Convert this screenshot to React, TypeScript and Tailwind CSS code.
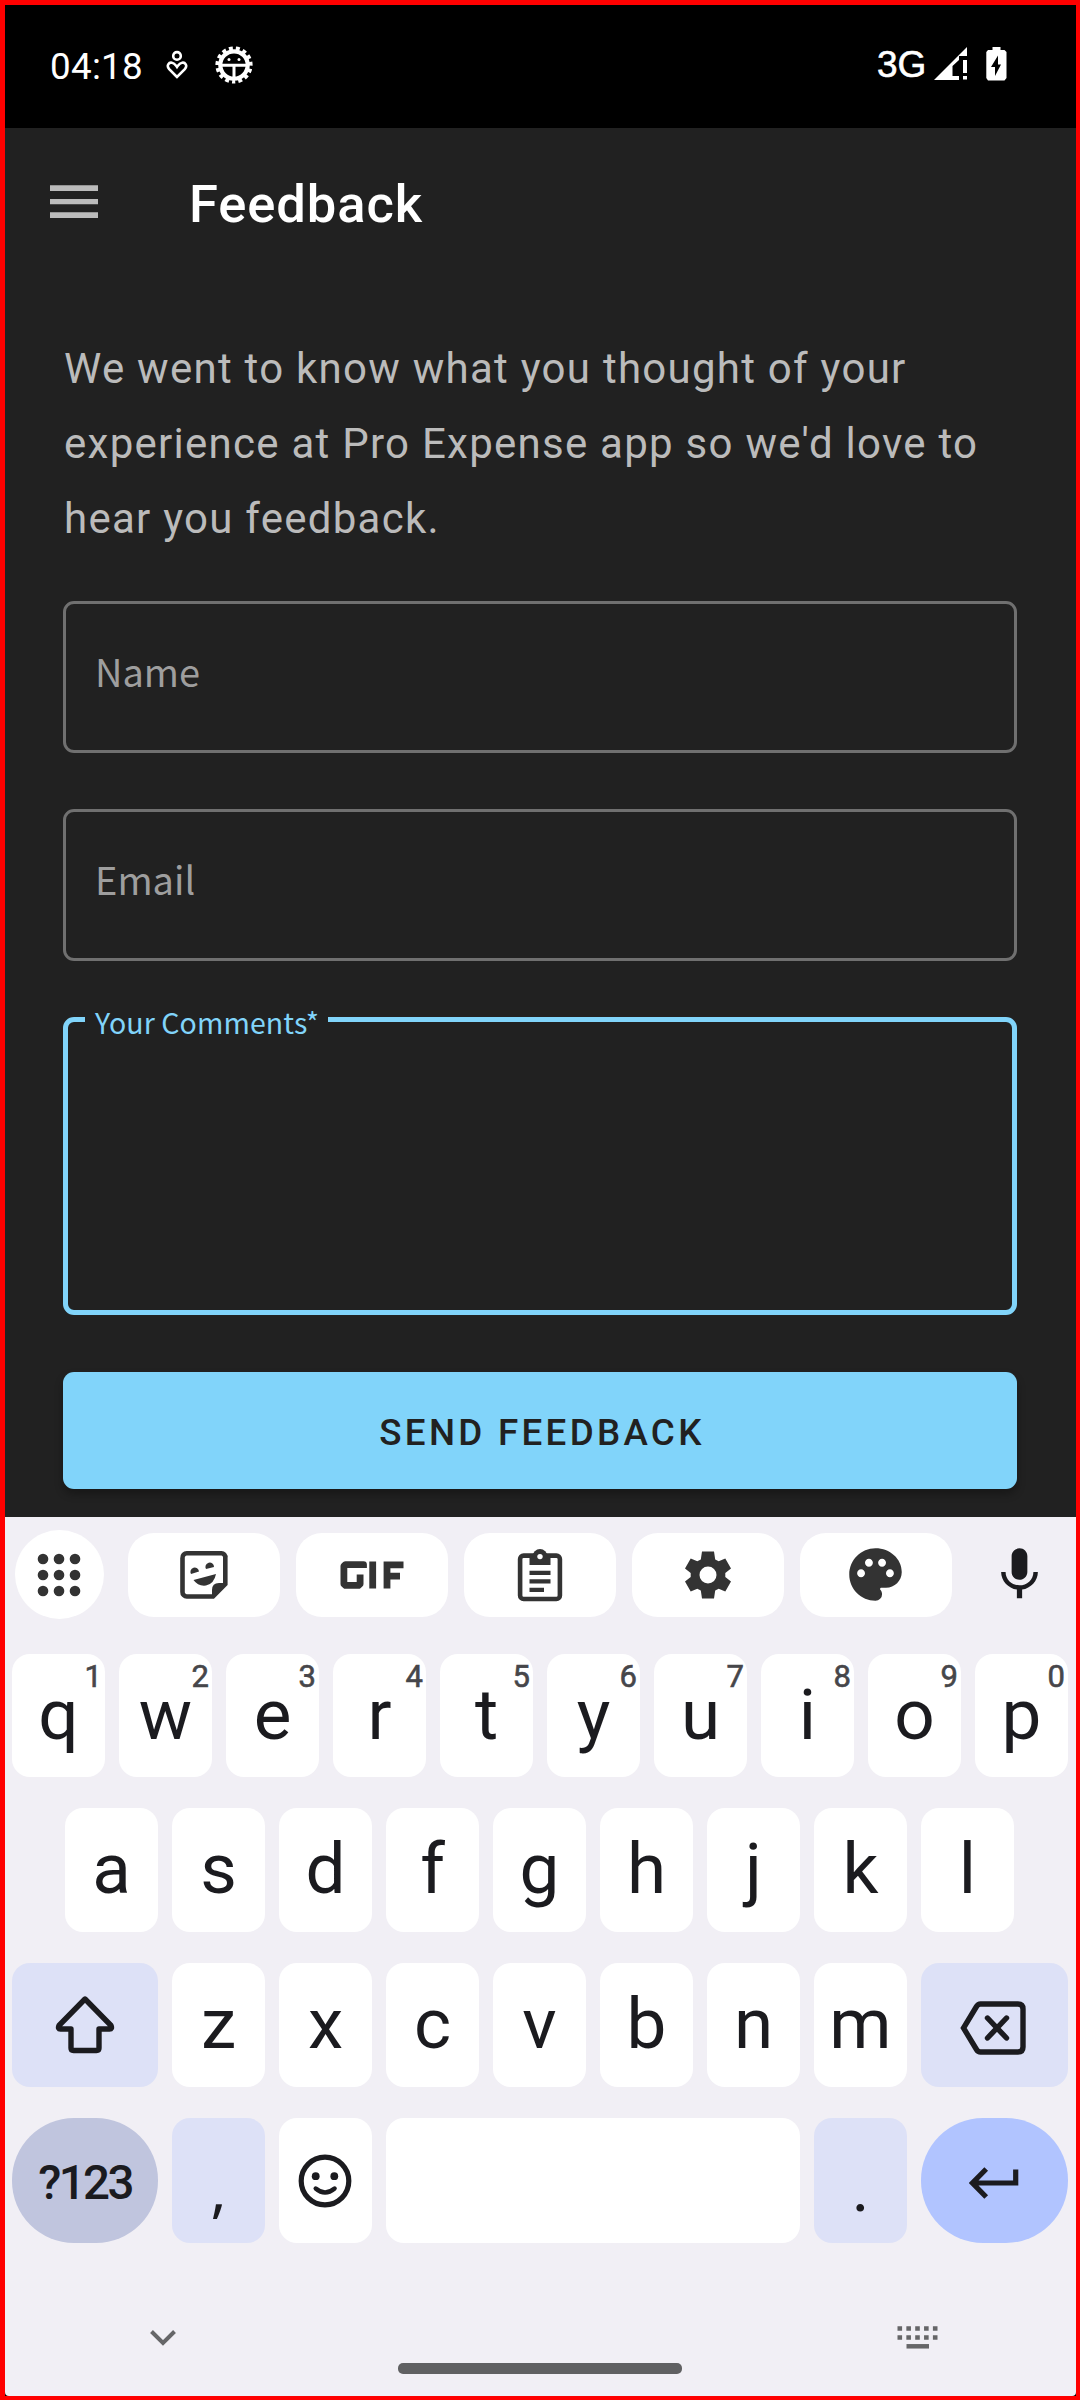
import React from "react";
import { MdPalette, MdMic } from "react-icons/md";

const topRow = ["q", "w", "e", "r", "t", "y", "u", "i", "o", "p"];
const midRow = ["a", "s", "d", "f", "g", "h", "j", "k", "l"];
const lowRow = ["z", "x", "c", "v", "b", "n", "m"];

function StatusBar() {
  return (
    <div className="flex h-[123px] w-full items-start bg-black text-white">
      <span className="ml-[45px] mt-[40px] w-[95px] text-[36.75px] leading-[44px] tracking-[0.3px]">04:18</span>
      <svg className="ml-[21px] mt-[45px] h-[30px] w-[22px]" viewBox="0 0 22 30" fill="none" stroke="white" strokeWidth="2.6">
        <circle cx="11" cy="5.9" r="3.8" />
        <path d="M11 27 L3.2 19.2 C0 15.5 3 12 6 12.7 C8.5 13 9.5 15 11 17 C12.5 15 13.5 13 16 12.7 C19 12 22 15.5 18.8 19.2 Z" />
      </svg>
      <svg className="ml-[26px] mt-[40px] h-[40px] w-[40px]" viewBox="-20 -20 40 40">
        <circle r="13.7" fill="none" stroke="white" strokeWidth="4.2" />
        <circle r="16.7" fill="none" stroke="white" strokeWidth="3.8" strokeDasharray="3.9 3.095" strokeDashoffset="1.95" transform="rotate(90)" />
        <circle cx="-5" cy="-5.5" r="1.5" fill="white" />
        <circle cx="5" cy="-5.5" r="1.5" fill="white" />
        <path d="M-13 0.3H13M0 0.3V14" stroke="white" strokeWidth="3" />
      </svg>
      <div className="grow" />
      <span className="mt-[38px] w-[50px] font-['Liberation_Sans',sans-serif] text-[37px] leading-[44px] [-webkit-text-stroke:0.6px_white]">3G</span>
      <svg className="ml-[6px] mt-[42px] h-[34px] w-[36px]" viewBox="0 0 36 34" fill="white">
        <path d="M34 0V9H26V13L19.5 19V29H26V33H1Z" />
        <path d="M30 13H34V26H30ZM30 29H34V32.5H30Z" />
      </svg>
      <svg className="ml-[17px] mr-[69px] mt-[42px] h-[34px] w-[21px]" viewBox="0 0 21 34">
        <path d="M6.5 0H14.5V3H18.5L20.5 5V31L18.5 33.5H2L0.3 31V5L2 3H6.5Z" fill="white" />
        <path d="M12 8.5L5 20H9V29L15 17.5H12Z" fill="black" />
      </svg>
    </div>
  );
}

function Field({ label }: { label: string }) {
  return (
    <div className="h-[152px] rounded-[11px] border-[3px] border-[#707070] pl-[29px] pt-[40px] font-['Noto_Sans_CJK_SC',sans-serif] text-[38px] leading-[54px] text-[#9e9e9e]">
      {label}
    </div>
  );
}

function Key({ label, hint }: { label: string; hint?: string }) {
  return (
    <div className="relative h-full w-[93px] shrink-0 rounded-[18px] bg-white pt-[21px] text-center text-[71px] leading-[80px] text-[#1b1b1f]">
      {label}
      {hint && <span className="absolute right-[3px] top-[5px] text-[31px] leading-[36px] text-[#46464a] [-webkit-text-stroke:0.6px_#46464a]">{hint}</span>}
    </div>
  );
}

function Tool({ children }: { children: React.ReactNode }) {
  return (
    <div className="mt-[16px] flex h-[84px] w-[152px] items-center justify-center rounded-[26px] bg-white pb-px pr-px text-[#333333]">{children}</div>
  );
}

function Toolbar() {
  return (
    <div className="flex h-[137px] items-start gap-[16px] pl-[10px]">
      <div className="mr-[8px] mt-[13px] flex h-[89px] w-[89px] items-center justify-center rounded-full bg-white pr-px">
        <svg className="h-[44px] w-[44px]" viewBox="-22 -22 44 44" fill="#333333">
          {[-16, 0, 16].map((y) => [-16, 0, 16].map((x) => <circle key={`${x},${y}`} cx={x} cy={y} r="5.3" />))}
        </svg>
      </div>
      <Tool>
        <svg className="h-[50px] w-[50px]" viewBox="0 0 50 50" fill="#333333">
          <path d="M8 3.3H42A4 4 0 0 1 46.3 8V34L34 46.5H8A4.3 4.3 0 0 1 3.5 42V8A4.3 4.3 0 0 1 8 3.3Z" fill="none" stroke="#333333" strokeWidth="4.6" />
          <path d="M33 48V40Q33 33 40 33H48ZM12 24A4.3 4.3 0 1 1 20 21.5ZM27 19A4.3 4.3 0 1 1 35 17ZM14.5 30L37 24Q35 34 27 35.5Q19 36.5 14.5 30Z" />
        </svg>
      </Tool>
      <Tool>
        <svg className="h-[28px] w-[64px]" viewBox="0 0 64 28" fill="none" stroke="#333333" strokeWidth="6.8">
          <path d="M23.5 7V3.6H5.5L3.9 5V23L5.5 24.4H18.5L20.1 23V13.5" strokeLinejoin="round" />
          <path d="M32.7 0.5V27.5M47 27.5V3.9H63.5M47 15.2H60" />
        </svg>
      </Tool>
      <Tool>
        <svg className="h-[54px] w-[46px]" viewBox="0 0 46 54" fill="none" stroke="#333333" strokeWidth="4.6">
          <rect x="3.1" y="7.6" width="39.8" height="43.4" rx="3.5" />
          <path d="M12.5 6H33.5V17H12.5Z" fill="#333333" stroke="none" />
          <circle cx="23" cy="8.4" r="7.4" fill="#333333" stroke="none" />
          <circle cx="23" cy="8.6" r="2.7" fill="white" stroke="none" />
          <path d="M12.5 24.8H33.5M12.5 33.4H33.5M12.5 41.8H27" strokeWidth="4.2" />
        </svg>
      </Tool>
      <Tool>
        <svg className="h-[48px] w-[48px]" viewBox="-24 -24 48 48">
          <path fillRule="evenodd" fill="#333333" d="M-6 -23.5H6L7.2 -15.6L10.7 -13.7L17.3 -16.5L23 -6.5L17.3 -2V2L23 6.5L17.3 16.5L10.7 13.7L7.2 15.6L6 23.5H-6L-7.2 15.6L-10.7 13.7L-17.3 16.5L-23 6.5L-17.3 2V-2L-23 -6.5L-17.3 -16.5L-10.7 -13.7L-7.2 -15.6ZM0 -8.5A8.5 8.5 0 1 0 0 8.5A8.5 8.5 0 1 0 0 -8.5Z" />
        </svg>
      </Tool>
      <Tool>
        <MdPalette size={63} />
      </Tool>
      <MdMic className="ml-[20px] mt-[26px] text-[#1b1b1f]" size={63} />
    </div>
  );
}

function Keyboard() {
  return (
    <div className="flex grow flex-col rounded-b-[4px] bg-[#f1eff5]">
      <Toolbar />
      <div className="flex h-[123px] gap-[14px] pl-[7px]">
        {topRow.map((k, i) => (
          <Key key={k} label={k} hint={String((i + 1) % 10)} />
        ))}
      </div>
      <div className="mt-[31px] flex h-[124px] gap-[14px] pl-[60px]">
        {midRow.map((k) => (
          <Key key={k} label={k} />
        ))}
      </div>
      <div className="mt-[31px] flex h-[124px] gap-[14px] pl-[7px]">
        <div className="flex w-[146px] items-center justify-center rounded-[18px] bg-[#dde1f7]">
          <svg className="h-[60px] w-[60px]" viewBox="0 0 60 60" fill="none" stroke="#1b1b1f" strokeWidth="5.4" strokeLinejoin="round">
            <path d="M30 4L4 30.5Q2.5 34 5.5 34H16V53Q16 55.5 18.5 55.5H41.5Q44 55.5 44 53V34H54.5Q57.5 34 56 30.5Z" />
          </svg>
        </div>
        {lowRow.map((k) => (
          <Key key={k} label={k} />
        ))}
        <div className="flex w-[147px] items-center justify-center rounded-[18px] bg-[#dde1f7] pr-[3px]">
          <svg className="mt-[6px] h-[54px] w-[66px]" viewBox="0 0 66 54" fill="none" stroke="#1b1b1f" strokeWidth="5.4">
            <path d="M20.5 3H58Q63 3 63 8V46Q63 51 58 51H20.5Q18 51 16.5 48.5L3.5 27L16.5 5.5Q18 3 20.5 3Z" />
            <path d="M27.5 17L46.5 37M46.5 17L27.5 37" strokeLinecap="round" />
          </svg>
        </div>
      </div>
      <div className="mt-[31px] flex h-[125px] gap-[14px] pl-[7px]">
        <div className="w-[146px] rounded-[62px] bg-[#c0c5de] pt-[36px] text-center text-[47.5px] font-medium leading-[58px] tracking-[-2.6px] text-[#1b1b1f]">?123</div>
        <div className="w-[93px] rounded-[18px] bg-[#dde1f7] pt-[30px] text-center font-['Noto_Sans',sans-serif] text-[60px] leading-[80px] text-[#1b1b1f]">,</div>
        <div className="flex w-[93px] items-center justify-center rounded-[18px] bg-white pr-px">
          <svg className="h-[54px] w-[54px]" viewBox="-27 -27 54 54">
            <circle r="23.8" fill="none" stroke="#1b1b1f" strokeWidth="5.2" />
            <circle cx="-9.3" cy="-4.8" r="3.9" fill="#1b1b1f" />
            <circle cx="9.3" cy="-4.8" r="3.9" fill="#1b1b1f" />
            <path d="M-9.3 7.5Q0 15.5 9.6 7.5" fill="none" stroke="#1b1b1f" strokeWidth="4.4" strokeLinecap="round" />
          </svg>
        </div>
        <div className="w-[414px] rounded-[18px] bg-white" />
        <div className="w-[93px] rounded-[18px] bg-[#dde1f7] pt-[30px] text-center text-[69px] leading-[80px] text-[#1b1b1f]">.</div>
        <div className="flex w-[147px] items-center justify-center rounded-[62px] bg-[#b1c4ff] pr-[2px]">
          <svg className="mt-[5px] h-[32px] w-[50px]" viewBox="0 0 50 32" fill="none" stroke="#1b1b1f" strokeWidth="5.2">
            <path d="M46.7 2.5V16H4M17.2 2L3.5 16L17.2 30" />
          </svg>
        </div>
      </div>
      <div className="mt-[83px] flex items-start justify-between pl-[144px] pr-[137px] text-[#666668]">
        <svg className="mt-[3px] h-[18px] w-[28px]" viewBox="0 0 28 18" fill="none" stroke="currentColor" strokeWidth="4">
          <path d="M2.5 2.5L14 14L25.5 2.5" />
        </svg>
        <svg className="h-[24px] w-[42px]" viewBox="0 0 42 24" fill="none" stroke="currentColor" strokeWidth="4.5">
          <path d="M0.5 2.5H42M0.5 11.5H42" strokeDasharray="4.6 4.25" />
          <path d="M9.5 20.3H32" />
        </svg>
      </div>
      <div className="mr-px mt-[13px] h-[11px] w-[284px] self-center rounded-[5px] bg-[#606062]" />
    </div>
  );
}

export default function App() {
  return (
    <div className="flex h-[2400px] w-[1080px] flex-col overflow-hidden border-[4px] border-l-[5px] border-t-[5px] border-[#ff0000] bg-black font-['Roboto',sans-serif]">
      <StatusBar />
      <div className="h-[1389px] shrink-0 bg-[#212121]">
        <div className="flex items-start pl-[45px] pt-[57px]">
          <svg className="h-[34px] w-[48px]" viewBox="0 0 48 34" fill="#bbbbbb">
            <path d="M0 0.3H48V6H0ZM0 14H48V19.3H0ZM0 27.3H48V33H0Z" />
          </svg>
          <h1 className="ml-[91px] mt-[-11px] text-[52.5px] font-medium leading-[60px] tracking-[0.9px] text-white">Feedback</h1>
        </div>
        <div className="pl-[58px] pr-[59px] pt-[97px]">
          <p className="whitespace-pre pl-px text-[42px] leading-[75px] tracking-[1.26px] text-[#bbbbbb]">
            {"We went to know what you thought of your\nexperience at Pro Expense app so we'd love to\nhear you feedback."}
          </p>
          <div className="mt-[45px]">
            <Field label="Name" />
          </div>
          <div className="mt-[56px]">
            <Field label="Email" />
          </div>
          <div className="relative mt-[56px] h-[298px] rounded-[11px] border-[5px] border-[#81d4fa]">
            <span className="absolute left-[17px] top-[-20px] w-[243px] bg-[#212121] pl-[10px] font-['Noto_Sans_CJK_SC',sans-serif] text-[28.5px] leading-[40px] tracking-[0.1px] text-[#81d4fa]">
              Your Comments*
            </span>
          </div>
          <div className="mt-[57px] h-[117px] rounded-[11px] bg-[#81d4fa] pl-[4px] pt-[36px] text-center text-[36.75px] font-medium leading-[50px] tracking-[3.3px] text-[#212121] shadow-[0_5px_8px_rgba(0,0,0,0.3)]">
            SEND FEEDBACK
          </div>
        </div>
      </div>
      <Keyboard />
    </div>
  );
}
